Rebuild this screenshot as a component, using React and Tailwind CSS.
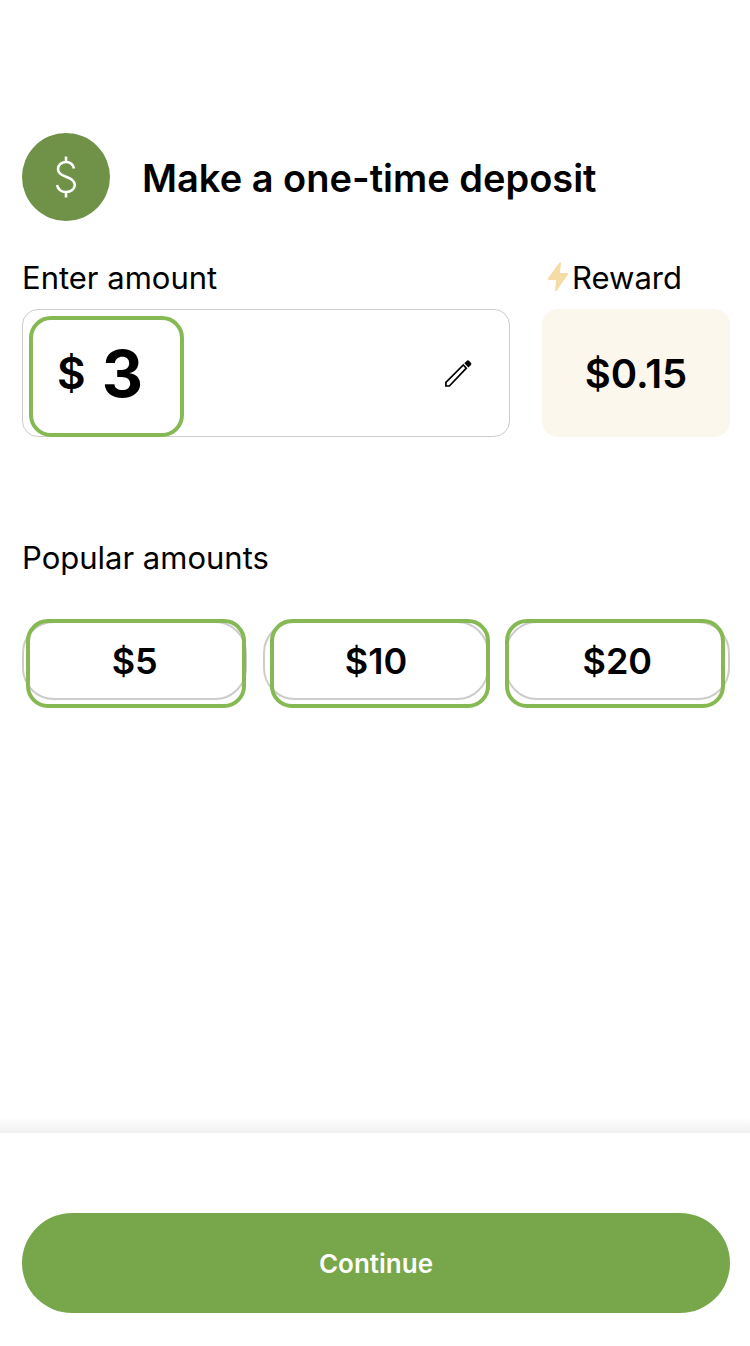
import { useState } from "react";

const PRESETS = [
  { value: 5, frame: "left-1" },
  { value: 10, frame: "left-[7px]" },
  { value: 20, frame: "left-0" },
];

function DollarIcon() {
  return (
    <svg viewBox="0 0 24 44" className="h-11 w-6" fill="none" stroke="white" strokeWidth="2.6" aria-hidden="true">
      <path d="M12 1.5V7M12 37V42.5" />
      <path d="M20 13.5C19 9.5 16 7 12 7C7.5 7 4 9.8 4 14C4 18.5 7.5 20.2 12 21.8C17 23.5 20.8 25.3 20.8 30C20.8 34.2 17 37 12 37C7 37 4 34.2 3 30" />
    </svg>
  );
}

function BoltIcon() {
  return (
    <svg viewBox="0 0 20 30" className="h-[30px] w-5" fill="#f5dca5" aria-hidden="true">
      <path d="M11.2 1.1C11.8 0.2 13.1 0.6 13 1.7L11.8 11H19C19.9 11 20.3 12 19.8 12.8L8.8 28.6C8.2 29.5 6.9 29.1 7 28L8.2 18H1C0.1 18-0.3 17-.1 16.4Z" />
    </svg>
  );
}

function PencilIcon() {
  return (
    <svg viewBox="0 0 28 28" className="size-7" fill="none" stroke="black" strokeWidth="1.7" aria-hidden="true">
      <path d="M1.9 27V23.4L19.3 6L22.3 9.2L5.4 27Z" />
      <path d="M21.2 4.2L23.4 2.1Q24 1.7 24.6 2.2L26.6 4.4Q27 5 26.5 5.5L24.4 7.6Z" fill="black" strokeWidth="1.2" />
    </svg>
  );
}

export default function App() {
  const [amount, setAmount] = useState("3");
  const reward = (Number(amount) * 0.05).toFixed(2);

  return (
    <div className="flex min-h-screen flex-col bg-white font-['Inter',sans-serif] text-black">
      <main className="flex-1 pt-[133px] pr-5 pl-[22px]">
        <header className="flex items-center gap-8">
          <div className="flex size-[88px] shrink-0 items-center justify-center rounded-full bg-[#6f9148]">
            <DollarIcon />
          </div>
          <h1 className="pt-0.5 text-[38px] leading-12 font-semibold">Make a one-time deposit</h1>
        </header>

        <div className="mt-9 grid grid-cols-[minmax(0,1fr)_188px] gap-x-8">
          <div>
            <label htmlFor="amount" className="block h-[52px] text-[31px] leading-[42px]">
              Enter amount
            </label>
            <div className="relative flex h-32 items-center rounded-2xl border border-[#cccccc] pr-[37px] pl-[34px]">
              <span className="text-[44px] leading-none font-semibold">$</span>
              <input
                id="amount"
                inputMode="decimal"
                value={amount}
                onChange={(e) => setAmount(e.target.value.replace(/[^0-9.]/g, ""))}
                className="ml-4 min-w-0 flex-1 bg-transparent text-[64px] leading-none font-bold outline-none"
              />
              <button type="button" aria-label="Edit amount">
                <PencilIcon />
              </button>
              <span className="pointer-events-none absolute top-1.5 -bottom-px left-1.5 w-[155px] rounded-[22px] border-4 border-[#86b953]" />
            </div>
          </div>
          <div>
            <h2 className="flex h-[52px] items-start gap-1 pl-1.5 text-[31px] leading-[42px]">
              <span className="flex h-10 items-center">
                <BoltIcon />
              </span>
              Reward
            </h2>
            <output htmlFor="amount" className="flex h-32 items-center justify-center rounded-2xl bg-[#fcf7ec] pt-0.5 text-[40px] font-semibold">
              ${reward}
            </output>
          </div>
        </div>

        <section className="mt-[100px]">
          <h2 className="text-[31px] leading-[42px]">Popular amounts</h2>
          <div className="mt-[42px] grid grid-cols-3 gap-4">
            {PRESETS.map(({ value, frame }) => (
              <button
                key={value}
                type="button"
                onClick={() => setAmount(String(value))}
                className="relative h-[79px] rounded-[32px] border-2 border-[#cccccc] text-4xl font-semibold"
              >
                ${value}
                <span className={`pointer-events-none absolute -top-1 -ml-0.5 h-[89px] w-[220px] rounded-[22px] border-4 border-[#86b953] ${frame}`} />
              </button>
            ))}
          </div>
        </section>
      </main>

      <div className="h-4 bg-linear-to-b from-white to-[#f0f0f0]" />
      <footer className="bg-white pt-20 pr-5 pb-[33px] pl-[22px]">
        <button type="button" className="h-[100px] w-full rounded-full bg-[#78a64a] text-[26px] font-semibold text-white">
          Continue
        </button>
      </footer>
    </div>
  );
}
